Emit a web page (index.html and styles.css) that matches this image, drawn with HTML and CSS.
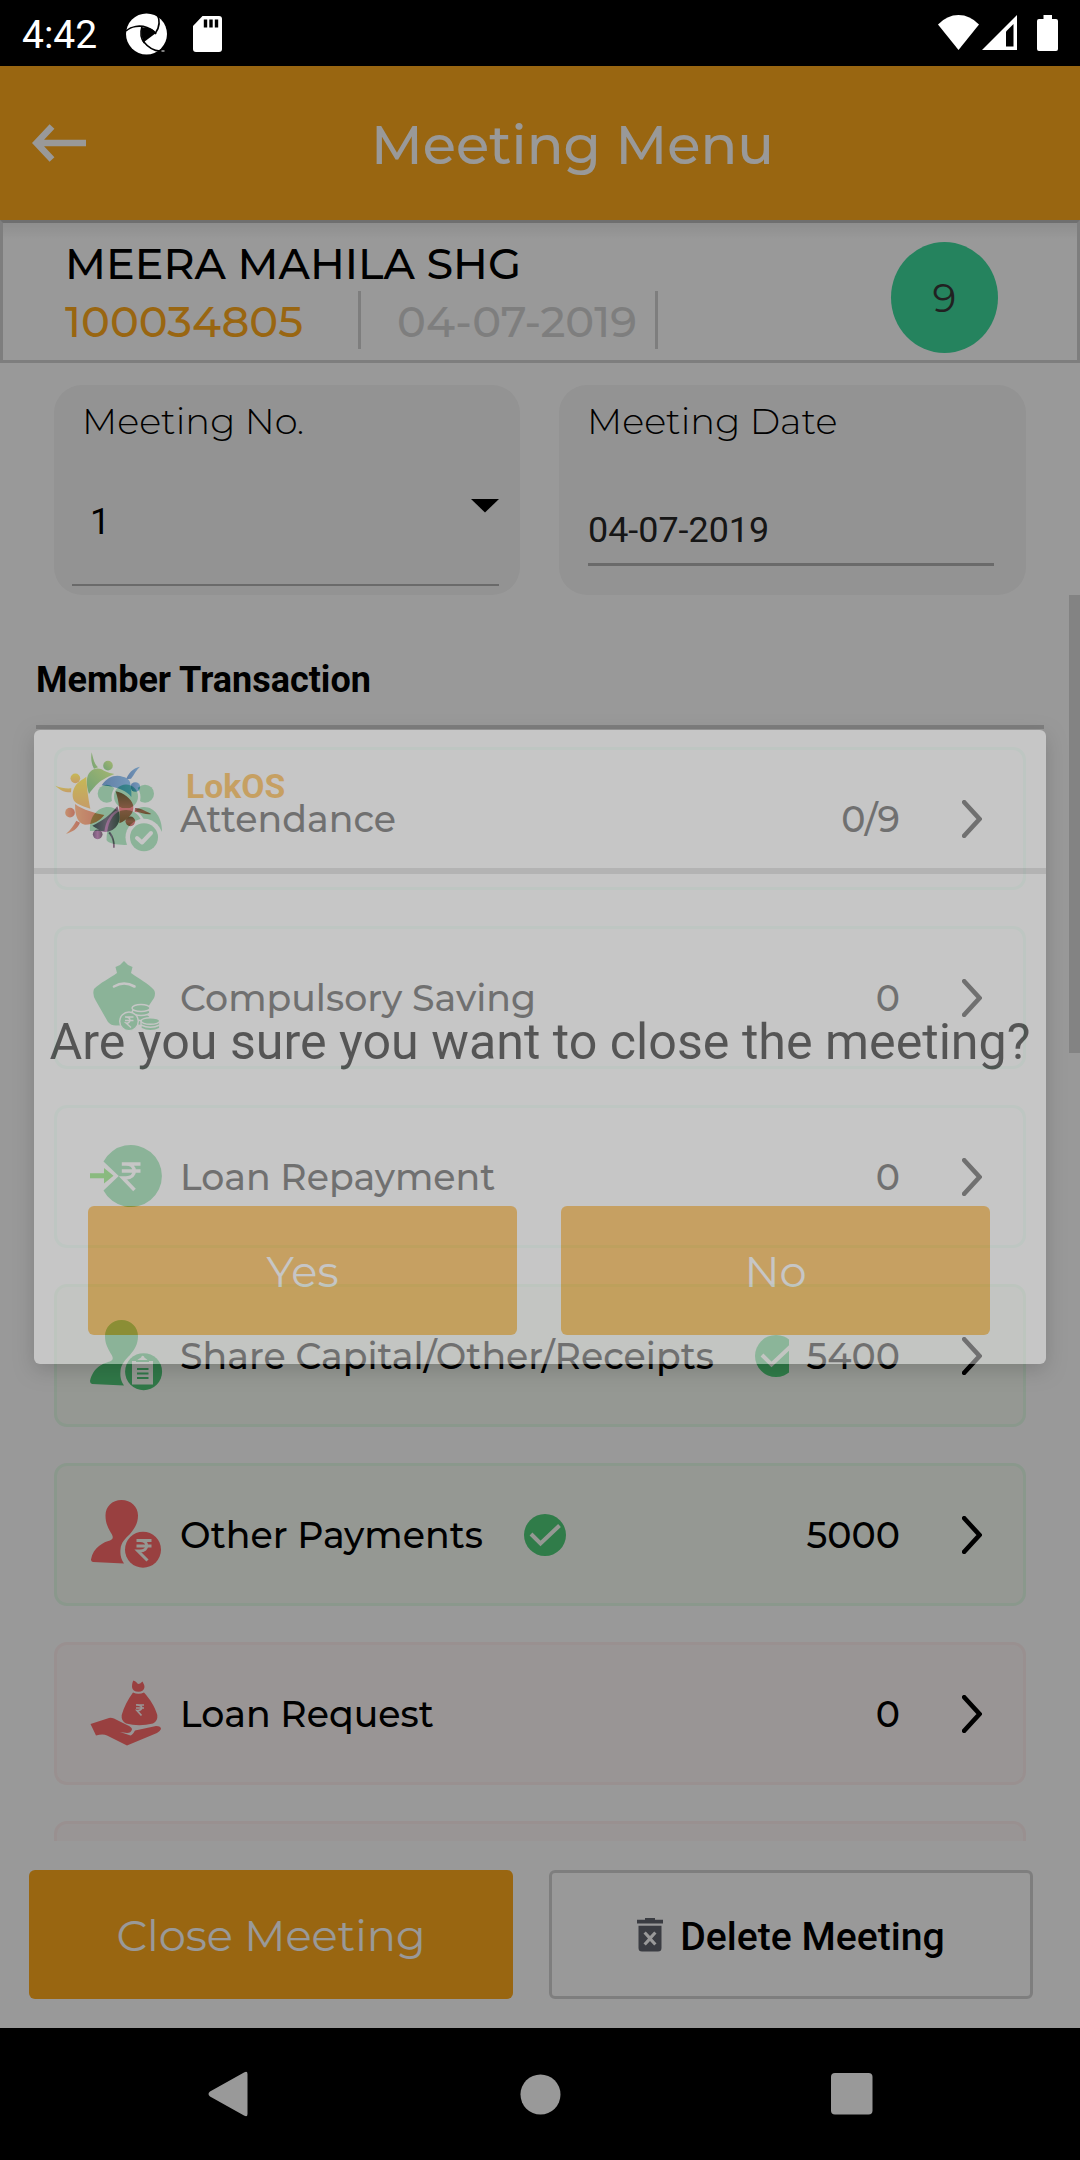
FILE: index.html
```html
<!DOCTYPE html>
<html lang="en">
<head>
<meta charset="utf-8">
<title>Meeting Menu</title>
<link rel="stylesheet" href="styles.css">
</head>
<body>
<div class="phone">
  <div class="status">
    <span class="clock">4:42</span>
    <svg class="st-app" width="42" height="42" viewBox="0 0 42 42"><circle cx="20.500" cy="21" r="20.500" fill="#fff"/><path d="M16 14.500C23 14 28 16.500 30 20L18 29C15.500 25 14.500 20 16 14.500Z" fill="#000"/><g fill="none" stroke="#000" stroke-width="1.600"><path d="M0 18C5 13 14 12 21 14.500S29 20 30 21"/><path d="M31 1C34.500 8 33 15 29.500 20"/><path d="M17 28C21 33 27 38 34 38"/><path d="M16 13.500C14 20 15 26 18.500 30"/></g><path d="M35 37h6v5h-8z" fill="#000"/><path d="M35.500 38h3" stroke="#fff"/></svg>
    <svg class="st-sd" width="29" height="36" viewBox="0 0 29 36"><path d="M9.500 0H26a3 3 0 0 1 3 3V33a3 3 0 0 1-3 3H3a3 3 0 0 1-3-3V10Z" fill="#fff"/><path d="M12.500 3.500v8M18 3.500v8M23.500 3.500v8" stroke="#000" stroke-width="3.400"/></svg>
    <span class="grow"></span>
    <svg width="42" height="36" viewBox="0 0 42 36"><path d="M0 9.500Q9 0 20.500 0T41 9.500L20.500 35Z" fill="#fff"/></svg>
    <svg class="st-cell" width="35" height="36" viewBox="0 0 35 36"><path d="M35 0V35H0Z" fill="#fff"/><path d="M24 16.500L31.500 9V31.500H24Z" fill="#000"/></svg>
    <svg class="st-bat" width="21" height="36" viewBox="0 0 21 36"><path d="M6.500 0h8.500v4h4a2 2 0 0 1 2 2V34a2 2 0 0 1-2 2H2a2 2 0 0 1-2-2V6a2 2 0 0 1 2-2h4.500Z" fill="#fff"/></svg>
  </div>

  <header class="bar">
    <svg class="back" width="54" height="38" viewBox="0 0 54 38"><path d="M54 19H5M20 2.500L4.500 19L20 35.500" fill="none" stroke="#fff" stroke-width="6.600"/></svg>
    <h1>Meeting Menu</h1>
  </header>

  <section class="group">
    <div>
      <div class="g-name">MEERA MAHILA SHG</div>
      <div class="g-meta"><span class="g-id">100034805</span><i></i><span class="g-date">04-07-2019</span><i></i></div>
    </div>
    <div class="count">9</div>
  </section>

  <section class="fields">
    <div class="field">
      <label>Meeting No.</label>
      <div class="select"><span>1</span><svg width="28" height="14" viewBox="0 0 28 14"><path d="M0 0H28L14 13.500Z"/></svg></div>
    </div>
    <div class="field field-date">
      <label>Meeting Date</label>
      <div class="input">04-07-2019</div>
    </div>
  </section>

  <h2>Member Transaction</h2>

  <main class="list">
    <div class="row">
      <svg class="ico" viewBox="0 0 72 72"><g fill="#50c878"><circle cx="16.700" cy="11.700" r="9"/><circle cx="55" cy="11.700" r="9"/><path d="M0 49C-1 34 8 25 18 25C27 25 32 32 34 40V49ZM38 40C40 32 46 25 54 25C65 25 72 36 72 49L68 52H38Z"/><circle cx="36" cy="15" r="14.500" fill="#fff"/><circle cx="36" cy="14.500" r="12"/><path d="M14 55C14 38 23 26 36 26S58 38 58 55Z" fill="#fff"/><path d="M16.500 58C17 39 24 28 36 28S55 39 55 58C51 64 20 65 16.500 58Z"/></g><circle cx="54" cy="55.300" r="18.500" fill="#fff"/><circle cx="54" cy="55.300" r="14" fill="#50c878"/><path d="M47 56L52 60.500L61 51" fill="none" stroke="#fff" stroke-width="4" stroke-linecap="round" stroke-linejoin="round"/></svg>
      <div class="name"><span>Attendance</span></div><b>0/9</b>
      <svg class="chev" viewBox="0 0 20 38"><path d="M2.200 2.200L17.500 19L2.200 35.800"/></svg>
    </div>
    <div class="row">
      <svg class="ico" viewBox="0 0 72 72"><path d="M34 0L38 4L42.500 6L41 12C48 17 59 23 64 29Q66 32 64 37L48 61Q46 64.500 42 64L26 64.500Q21 64.500 18 61L6 40Q2 34 4 28C10 22 20 17 27 12L25.500 6L30 4Z" fill="#50c878"/><path d="M24 25.500Q34 19.500 44.500 25.500" fill="none" stroke="#fff" stroke-width="2.600" stroke-linecap="round"/><g stroke="#fff" stroke-width="1.400" fill="#50c878"><ellipse cx="51" cy="61" rx="9" ry="3.500"/><ellipse cx="51" cy="56" rx="9" ry="3.500"/><ellipse cx="51" cy="51" rx="9" ry="3.500"/><ellipse cx="51" cy="47" rx="9" ry="3.500"/><path d="M51 60V67.500Q60.500 72 69.800 67.500V60Z"/><path d="M51 64Q60.500 68.500 69.800 64"/><ellipse cx="60.400" cy="60" rx="9.300" ry="3.300"/><circle cx="39" cy="60.300" r="9.300"/></g><path d="M35 56H43.500M35 59.500H43.500M35 56C42 55.500 41 63 36 62L41 66.500" fill="none" stroke="#fff" stroke-width="1.400"/></svg>
      <div class="name"><span>Compulsory Saving</span></div><b>0</b>
      <svg class="chev" viewBox="0 0 20 38"><path d="M2.200 2.200L17.500 19L2.200 35.800"/></svg>
    </div>
    <div class="row">
      <svg class="ico" viewBox="0 0 72 72"><path d="M13.500 21.500A31 31 0 1 1 13.500 50.500L28.800 36Z" fill="#50c878"/><path d="M0 33.300H14V28L23.500 35.800L14 43.500V38.300H0Z" fill="#4edc2c"/><path d="M31.800 24H50.500M31.800 31H50.500M31.800 24H36C47 24 47 38 36 38H33L44.500 50" fill="none" stroke="#fff" stroke-width="3.600"/></svg>
      <div class="name"><span>Loan Repayment</span></div><b>0</b>
      <svg class="chev" viewBox="0 0 20 38"><path d="M2.200 2.200L17.500 19L2.200 35.800"/></svg>
    </div>
    <div class="row done">
      <svg class="ico" viewBox="0 0 72 72"><path d="M31.500 1C41 1 48 8 48 17C48 26 44 31 40 36C36 40 31 45 30.500 52C30 58 31 62 34 66.500L2 65Q0 64.500 0 62C3 48 14 44 20 42.500C24 41 23 38 21 35C17 28 15 24 15 17C15 8 22 1 31.500 1Z" fill="#50c878"/><circle cx="53.600" cy="52.700" r="18.500" fill="#50c878"/><path d="M42 42H47C48 39 51 40 51.500 37.500Q52.500 36 54 37.500C54.500 40 57 39 58 42H63V65.500H42Z" fill="#f9fdf6"/><path d="M46 42H59M47 50H58.500M47 54.500H58.500M47 59H58.500" stroke="#50c878" stroke-width="2"/></svg>
      <div class="name"><span>Share Capital/Other/Receipts</span><svg class="badge" viewBox="0 0 42 42"><circle cx="21" cy="21" r="21"/><path d="M7 20L16.500 29.500L35.500 11.500"/></svg></div><b>5400</b>
      <svg class="chev" viewBox="0 0 20 38"><path d="M2.200 2.200L17.500 19L2.200 35.800"/></svg>
    </div>
    <div class="row done">
      <svg class="ico" viewBox="0 0 72 72"><g fill="#ff6b6b"><path d="M31.500 2C41 2 48 8.500 48 17.500C48 26 44 31 40 36C36 40 31 44 30.500 51.500C30 57 31 61 34 65.500L3 64Q.800 63.500 1 61.500C3 49 14 44 20 42.500C24 41 23 38 21 35C17 28 15.500 24 15.500 17.500C15.500 8.500 22 2 31.500 2Z"/><circle cx="53" cy="51.700" r="18"/></g><path d="M46.500 42.500H61.500M46.500 48H61.500M46.500 42.500H50C59 42.500 59 53 50 53H48L57.500 62.500" fill="none" stroke="#f9fdf6" stroke-width="3"/></svg>
      <div class="name"><span>Other Payments</span><svg class="badge" viewBox="0 0 42 42"><circle cx="21" cy="21" r="21"/><path d="M7 20L16.500 29.500L35.500 11.500"/></svg></div><b>5000</b>
      <svg class="chev" viewBox="0 0 20 38"><path d="M2.200 2.200L17.500 19L2.200 35.800"/></svg>
    </div>
    <div class="row due">
      <svg class="ico" viewBox="0 0 72 72"><g fill="#ff6b6b"><path d="M43.500 3.500Q46 4 48 7Q50 7 52.500 4.500Q54.500 8 54.500 10Q54 14.500 48.500 14.800Q42.500 14.500 42 10Q42 5 43.500 3.500Z"/><path d="M43 15.500Q48.500 18 54 15.500C60 22 65 30 67.300 38Q68 44 63 46.500Q49 50 36 46.500Q31 44 31.700 38C34 30 38 22 43 15.500Z"/><path d="M.500 47L19 41Q21 40.500 24 41.500L37 48Q42 50 42 52.500Q41 56 37 56L30 55L40.500 58.500Q42.500 58 45 53.500L66 49Q71 49 71 52Q70 54.500 67 56L37 68.500L17 58.500Q13 56.500 6 58.500Z"/></g><path d="M46 28H54M46 31H54M46 28C54 27.500 53 34 47 33.500L51.500 38.500" fill="none" stroke="#fff9f9" stroke-width="1.700"/></svg>
      <div class="name"><span>Loan Request</span></div><b>0</b>
      <svg class="chev" viewBox="0 0 20 38"><path d="M2.200 2.200L17.500 19L2.200 35.800"/></svg>
    </div>
    <div class="row due"></div>
  </main>

  <footer class="actions">
    <button class="btn close"><span>Close Meeting</span></button>
    <button class="btn delete"><svg width="26" height="34" viewBox="0 0 26 34" fill="#61646e"><path d="M8 0H18V1.800H26V5.500H0V1.800H8Z"/><path fill-rule="evenodd" d="M1.500 7.800H24.500V30Q24.500 33.500 21 33.500H5Q1.500 33.500 1.500 30ZM6.500 15.500L11 20.500L6.500 25.500L8.800 27.600L13 23L17.200 27.600L19.500 25.500L15 20.500L19.500 15.500L17.200 13.400L13 18L8.800 13.400Z"/></svg><span>Delete Meeting</span></button>
  </footer>

  <nav class="nav">
    <svg width="40" height="46" viewBox="0 0 40 46"><path d="M36 1.500Q39.500 -.500 39.500 3V43Q39.500 46.500 36 44.500L2 25.500Q-1 23 2 20.500Z"/></svg>
    <svg width="41" height="41" viewBox="0 0 41 41"><circle cx="20.500" cy="20.500" r="20"/></svg>
    <svg width="42" height="42" viewBox="0 0 42 42"><rect width="41.500" height="41.500" rx="4"/></svg>
  </nav>

  <div class="thumb"></div>
  <div class="scrim"></div>

  <div class="dialog">
    <div class="d-head">
      <svg class="logo" width="97" height="96" viewBox="165 94 291 288">
        <defs>
          <linearGradient id="g" x1="0" y1="1" x2="1" y2="0"><stop offset="0" stop-color="#3fae49"/><stop offset="1" stop-color="#b4dc3c"/></linearGradient>
          <linearGradient id="b"><stop offset="0" stop-color="#1a5fb8"/><stop offset="1" stop-color="#4a9be6"/></linearGradient>
          <linearGradient id="y" x2="0" y2="1"><stop offset="0" stop-color="#ffe100"/><stop offset="1" stop-color="#ffa12b"/></linearGradient>
          <linearGradient id="o"><stop offset="0" stop-color="#ff8a3c"/><stop offset="1" stop-color="#e5401c"/></linearGradient>
          <linearGradient id="r" x2="0" y2="1"><stop offset="0" stop-color="#7c0d08"/><stop offset=".5" stop-color="#e8303a"/><stop offset="1" stop-color="#a01808"/></linearGradient>
          <linearGradient id="p"><stop offset="0" stop-color="#3b0a45"/><stop offset=".5" stop-color="#a03c94"/><stop offset="1" stop-color="#33082a"/></linearGradient>
        </defs>
        <g fill="url(#g)"><path d="M275 95C280 115 282 128 294 140L282 144C274 130 272 112 275 95Z"/><circle cx="324" cy="135" r="14.500"/><path d="M267 220C258 195 258 165 270 154C285 140 300 142 312 150C325 156 335 158 343 160C320 170 300 180 288 194C280 203 272 212 267 220Z"/></g>
        <g fill="url(#b)"><circle cx="406" cy="199" r="14.500"/><path d="M420 138C408 148 404 160 393 174L378 176C384 160 398 142 420 138Z"/><path d="M305 194C318 174 335 165 352 165C375 167 391 175 391 190C394 205 395 218 394 229C380 212 360 200 305 194Z"/></g>
        <g fill="url(#r)"><circle cx="391" cy="302" r="14.500"/><path d="M405 262C420 262 435 270 454 280C440 284 425 274 404 274Z"/><path d="M347 212C370 216 394 235 399 252C402 268 398 275 390 285C380 296 370 302 358 308C360 280 358 245 347 212Z"/></g>
        <g fill="url(#p)"><circle cx="293" cy="341" r="14.500"/><path d="M330 333C340 345 346 362 344 381L339 381C340 362 336 350 325 337Z"/><path d="M352 257C360 280 362 298 354 310C346 326 330 334 315 334C300 332 290 322 277 315C305 302 330 285 352 257Z"/></g>
        <g fill="url(#o)"><circle cx="210" cy="276" r="14.500"/><path d="M229 300L240 306C232 325 215 335 198 339C212 328 220 315 229 300Z"/><path d="M225 250C250 268 285 278 313 283C300 300 280 312 255 312C235 308 225 290 225 250Z"/></g>
        <g fill="url(#y)"><circle cx="226" cy="173" r="14.500"/><path d="M166 195C182 202 198 204 214 203L213 215C195 216 180 208 166 195Z"/><path d="M259 168C260 195 264 230 271 264C255 258 232 252 222 240C214 225 218 205 230 190C240 180 250 175 259 168Z"/></g>
      </svg>
      <span>LokOS</span>
    </div>
    <p>Are you sure you want to close the meeting?</p>
    <div class="d-btns"><button class="btn"><span>Yes</span></button><button class="btn"><span>No</span></button></div>
  </div>
</div>
</body>
</html>
```
FILE: styles.css
```css
* { box-sizing: border-box; }
body { margin: 0; }
svg { display: block; flex: none; }
h1, h2, p { margin: 0; }
.phone {
  position: relative; width: 1080px; height: 2160px; overflow: hidden;
  display: flex; flex-direction: column; background: #fff; color: #000;
  font-family: Montserrat, Inter, sans-serif;
}
.grow { flex: 1; }

.status { height: 66px; flex: none; background: #000; color: #fff; display: flex; align-items: flex-start; padding: 15px 22px 0 22px; }
.clock { font: 400 39px/40px Roboto, sans-serif; width: 104px; }
.st-app { margin-top: -2px; }
.st-sd { margin: 1px 0 0 25px; }
.st-cell { margin-left: 2px; }
.st-bat { margin-left: 20px; }

.bar { height: 154px; flex: none; background: #ffab1d; color: #fff; display: flex; align-items: center; padding-left: 32px; }
.bar h1 { font-size: 54.200px; font-weight: 500; line-height: 66px; margin-left: 285px; padding-top: 4px; }

.group {
  height: 143px; flex: none; border: 3px solid #d3d3d3; border-top-color: #b9b9b9; padding: 14px 79px 0 62px;
  display: flex; justify-content: space-between; background: linear-gradient(#ededed, #fff 16px);
}
.g-name { font-size: 42.900px; font-weight: 500; line-height: 54px; white-space: nowrap; }
.g-meta { display: flex; height: 58px; font-size: 43.300px; font-weight: 500; line-height: 61px; }
.g-meta i { width: 3px; background: #d3d3d3; }
.g-id { width: 293px; color: #ffab1d; }
.g-date { width: 294px; padding-left: 36px; color: #d3d3d3; }
.count {
  width: 107px; height: 111px; margin-top: 5px; border-radius: 50%; background: #3eda9d; color: #383838;
  font-size: 39px; font-weight: 400; line-height: 112px; text-align: center;
}

.fields { flex: none; display: flex; gap: 39px; padding: 22px 54px 0; }
.field { width: 466px; height: 210px; border-radius: 28px; background: #f5f5f5; padding: 14px 21px 0 18px; }
.field label { display: block; font-size: 36.800px; font-weight: 300; line-height: 44px; padding-left: 10px; }
.select {
  display: flex; justify-content: space-between; align-items: flex-start; height: 143px;
  border-bottom: 2px solid #b1b1b1; padding: 56px 0 0 18px; font: 400 36px/46px Roboto, sans-serif;
}
.field-date { width: 467px; padding: 14px 32px 0 28px; }
.field-date label { padding-left: 0; }
.input { margin-left: 1px; height: 123px; padding-top: 66px; border-bottom: 3px solid #b1b1b1; color: #252525; font: 400 35.900px/42px Roboto, sans-serif; }

h2 { flex: none; margin: 64px 36px 0; height: 70px; border-bottom: 4px solid #d3d3d3; font: 700 36px/42px Roboto, sans-serif; }

.list { height: 1112px; flex: none; overflow: hidden; padding: 18px 54px 0; display: flex; flex-direction: column; gap: 36px; }
.row { height: 143px; flex: none; border: 3px solid #e8fff4; border-radius: 13px; display: flex; align-items: center; padding: 0 41px 0 33px; }
.row.done { background: #f9fdf6; border-color: #e6fdea; }
.row.due { background: #fff9f9; border-color: #fff0f0; }
.ico { width: 72px; height: 72px; margin-top: -1px; overflow: visible; }
.name { display: flex; align-items: center; width: 609px; margin-left: 18px; overflow: hidden; font-size: 36.300px; font-weight: 500; line-height: 60px; white-space: nowrap; }
.name span { padding-top: 1px; }
.badge { width: 42px; height: 42px; margin-left: 41px; fill: #50cf7a; }
.badge path { fill: none; stroke: #f9fdf6; stroke-width: 4; }
.row b { flex: 1; padding-top: 1px; text-align: right; font-size: 36.300px; font-weight: 500; }
.chev { width: 20px; height: 38px; margin-left: 62px; fill: none; stroke: #000; stroke-width: 4.600; stroke-linecap: round; }

.btn {
  display: flex; align-items: center; justify-content: center; height: 129px; margin: 0; padding: 0; border: 0;
  border-radius: 6px; background: #ffab1d; color: #fff; font: 400 43.200px Montserrat, Inter, sans-serif;
}
.btn span { padding-top: 2px; }
.actions { flex: none; height: 187px; padding: 29px; display: flex; gap: 36px; }
.actions .btn { width: 484px; flex: none; }
.actions .delete { background: #fff; border: 3px solid #d3d3d3; color: #000; font: 500 39.200px Roboto, sans-serif; gap: 17px; }
.btn.delete span { padding-top: 4px; }

.nav { flex: none; height: 132px; background: #000; fill: #fff; display: grid; grid-template-columns: 312px 312px 312px; justify-content: center; justify-items: center; align-items: center; }

.thumb { position: absolute; left: 1069px; top: 595px; width: 11px; height: 458px; background: #dadada; }
.scrim { position: absolute; inset: 66px 0 0; background: rgba(0, 0, 0, .4); }

.dialog {
  position: absolute; left: 34px; top: 730px; width: 1012px; height: 634px; opacity: .44;
  background: #fff; border-radius: 6px; box-shadow: 0 6px 20px rgba(0, 0, 0, .35);
}
.d-head { height: 144px; border-bottom: 6px solid #d6d6d6; display: flex; padding: 22px 0 0 21px; }
.d-head span { margin: 14px 0 0 34px; font: 700 33.700px/42px Roboto, sans-serif; color: #ffab1d; }
.dialog p { padding-top: 138px; text-align: center; white-space: nowrap; font: 400 50.200px/60px Roboto, sans-serif; }
.d-btns { display: flex; gap: 44px; padding: 134px 54px 0; }
.d-btns .btn { width: 429px; }
```
